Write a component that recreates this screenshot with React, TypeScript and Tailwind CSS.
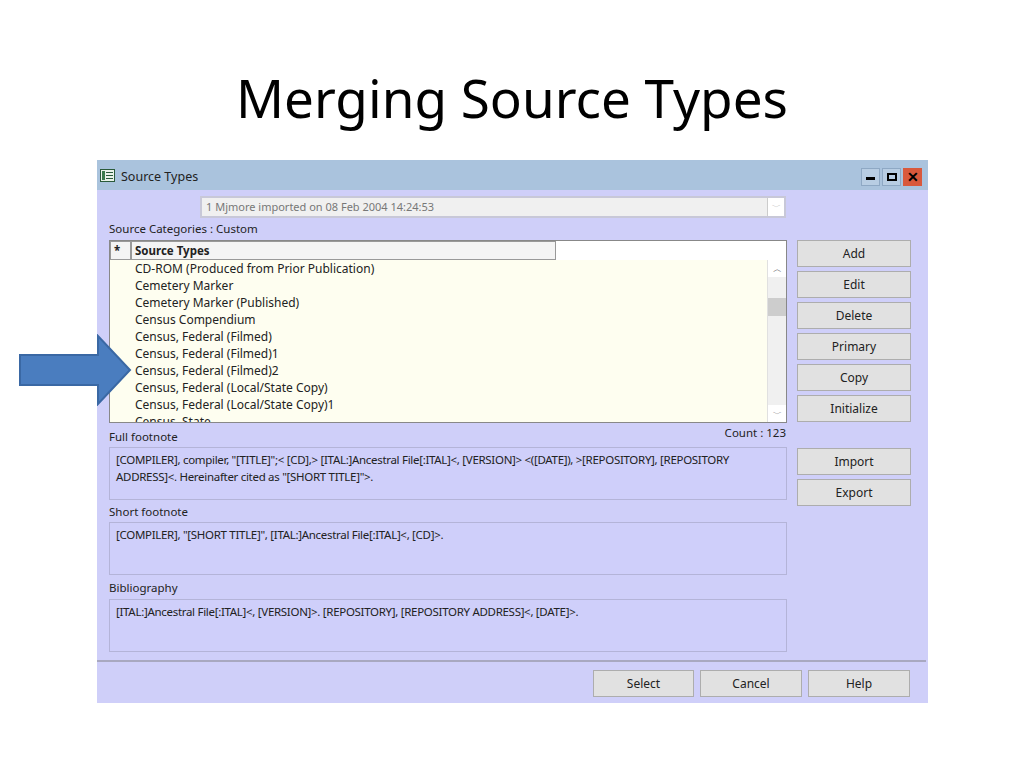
import React from 'react';

const rows = [
  'CD-ROM (Produced from Prior Publication)',
  'Cemetery Marker',
  'Cemetery Marker (Published)',
  'Census Compendium',
  'Census, Federal (Filmed)',
  'Census, Federal (Filmed)1',
  'Census, Federal (Filmed)2',
  'Census, Federal (Local/State Copy)',
  'Census, Federal (Local/State Copy)1',
  'Census, State',
];

function Btn({ label, className = '' }: { label: string; className?: string }) {
  return (
    <div className={`h-[27px] flex items-center justify-center bg-[#e1e1e1] border border-[#adadad] text-[12px] text-[#222] ${className}`}>
      {label}
    </div>
  );
}

function TextBox({ text }: { text: string }) {
  return (
    <div className="h-[53px] w-[678px] border border-[#b4b4d8] bg-[#cfcffa] px-[6px] py-[3px] text-[11.5px] leading-[17px] text-[#222] font-['Liberation_Sans',sans-serif] tracking-[-0.3px]">
      {text}
    </div>
  );
}

export default function App() {
  return (
    <div className="relative w-[1024px] h-[768px] bg-white font-['Open_Sans',sans-serif] overflow-hidden">
      <h1 className="pt-[64px] h-[160px] text-center text-[53px] leading-[68px] text-black font-['Lato',sans-serif]">
        Merging Source Types
      </h1>

      {/* window */}
      <div className="ml-[97px] w-[831px] h-[543px] bg-[#cfcff9] flex flex-col text-[12px] text-[#222]">
        {/* title bar */}
        <div className="h-[30px] bg-[#aac3dd] flex items-center pl-[3px] pr-[6px]">
          <svg width="15" height="13" viewBox="0 0 15 13" className="mr-[6px]">
            <rect x="0.5" y="0.5" width="14" height="12" fill="#e8f2e8" stroke="#2a5a3a" />
            <rect x="2" y="2" width="3" height="9" fill="#3a7a4a" />
            <line x1="6" y1="3.5" x2="13" y2="3.5" stroke="#2a5a3a" />
            <line x1="6" y1="6.5" x2="13" y2="6.5" stroke="#2a5a3a" />
            <line x1="6" y1="9.5" x2="13" y2="9.5" stroke="#2a5a3a" />
          </svg>
          <span className="text-[12.5px] mt-[4px]">Source Types</span>
          <div className="ml-auto mt-[4px] flex gap-[2px]">
            <div className="w-[19px] h-[18px] bg-[#b8cde3] border border-[#8ea8c4] flex items-end justify-center pb-[5px]"><div className="w-[9px] h-[3px] bg-black" /></div>
            <div className="w-[19px] h-[18px] bg-[#b8cde3] border border-[#8ea8c4] flex items-center justify-center"><div className="w-[10px] h-[8px] border-2 border-black" /></div>
            <div className="w-[19px] h-[18px] bg-[#d9593c] flex items-center justify-center text-black font-bold text-[14px] leading-none">✕</div>
          </div>
        </div>

        <div className="flex flex-col pl-[12px] pt-[6px]">
          {/* combo */}
          <div className="ml-[91px] w-[586px] h-[22px] bg-[#f0f0f0] border-2 border-[#c8c8d8] flex items-center text-[11px] text-[#777]">
            <span className="pl-[4px] flex-1">1 Mjmore imported on 08 Feb 2004 14:24:53</span>
            <div className="w-[17px] h-full bg-white border-l border-[#ccc] flex items-center justify-center text-[#aaa] text-[9px]">﹀</div>
          </div>
          <div className="mt-[1px] h-[20px] text-[11.5px] flex items-center">Source Categories : Custom</div>

          <div className="flex mt-[1px]">
            <div className="flex flex-col">
              {/* list */}
              <div className="w-[678px] h-[183px] border border-[#888] bg-[#fefef0] flex flex-col overflow-hidden">
                <div className="h-[19px] bg-white flex shrink-0 text-[11.5px] font-bold">
                  <div className="w-[21px] border border-[#999] bg-[#f4f4f4] pl-[3px]">*</div>
                  <div className="w-[425px] border border-[#999] bg-[#f4f4f4] pl-[3px]">Source Types</div>
                </div>
                <div className="flex flex-1 min-h-0">
                  <div className="flex-1 pl-[25px] text-[12px] leading-[17px] overflow-hidden">
                    {rows.map(r => <div key={r} className="h-[17px]">{r}</div>)}
                  </div>
                  <div className="w-[19px] bg-[#f0f0f0] flex flex-col border-l border-[#e0e0e0]">
                    <div className="h-[17px] bg-white text-[9px] flex items-center justify-center text-[#666]">︿</div>
                    <div className="h-[21px]" />
                    <div className="h-[18px] bg-[#cdcdcd]" />
                    <div className="flex-1" />
                    <div className="h-[17px] bg-white text-[9px] flex items-center justify-center text-[#666]">﹀</div>
                  </div>
                </div>
              </div>

              <div className="flex justify-between items-start h-[24px] text-[11.5px]">
                <span className="mt-[5px]">Full footnote</span>
                <span className="mt-[1px] mr-[1px]">Count : 123</span>
              </div>
              <TextBox text={'[COMPILER], compiler, "[TITLE]";< [CD],> [ITAL:]Ancestral File[:ITAL]<, [VERSION]> <([DATE]), >[REPOSITORY], [REPOSITORY ADDRESS]<. Hereinafter cited as "[SHORT TITLE]">.'} />
              <div className="h-[22px] text-[11.5px] flex items-end pb-[2px]">Short footnote</div>
              <TextBox text={'[COMPILER], "[SHORT TITLE]", [ITAL:]Ancestral File[:ITAL]<, [CD]>.'} />
              <div className="h-[24px] text-[11.5px] flex items-end pb-[3px]">Bibliography</div>
              <TextBox text={'[ITAL:]Ancestral File[:ITAL]<, [VERSION]>. [REPOSITORY], [REPOSITORY ADDRESS]<, [DATE]>.'} />
            </div>

            <div className="ml-[10px] w-[114px] flex flex-col gap-[4px]">
              <Btn label="Add" />
              <Btn label="Edit" />
              <Btn label="Delete" />
              <Btn label="Primary" />
              <Btn label="Copy" />
              <Btn label="Initialize" />
              <div className="h-[18px]" />
              <Btn label="Import" />
              <Btn label="Export" />
            </div>
          </div>
        </div>

        <div className="mt-[8px] h-[2px] bg-[#a8a8c0] mr-[2px]" />
        <div className="flex justify-end gap-[6px] pr-[18px] pt-[8px]">
          <Btn label="Select" className="w-[101px]" />
          <Btn label="Cancel" className="w-[102px] border-[#5f96cf]" />
          <Btn label="Help" className="w-[102px]" />
        </div>
      </div>

      {/* arrow */}
      <svg className="absolute left-[18px] top-[334px]" width="116" height="72" viewBox="0 0 116 72">
        <polygon points="2,21 80,21 80,2 112,36 80,70 80,51 2,51" fill="#4a7dbf" stroke="#3a68a4" strokeWidth="2" />
      </svg>
    </div>
  );
}
